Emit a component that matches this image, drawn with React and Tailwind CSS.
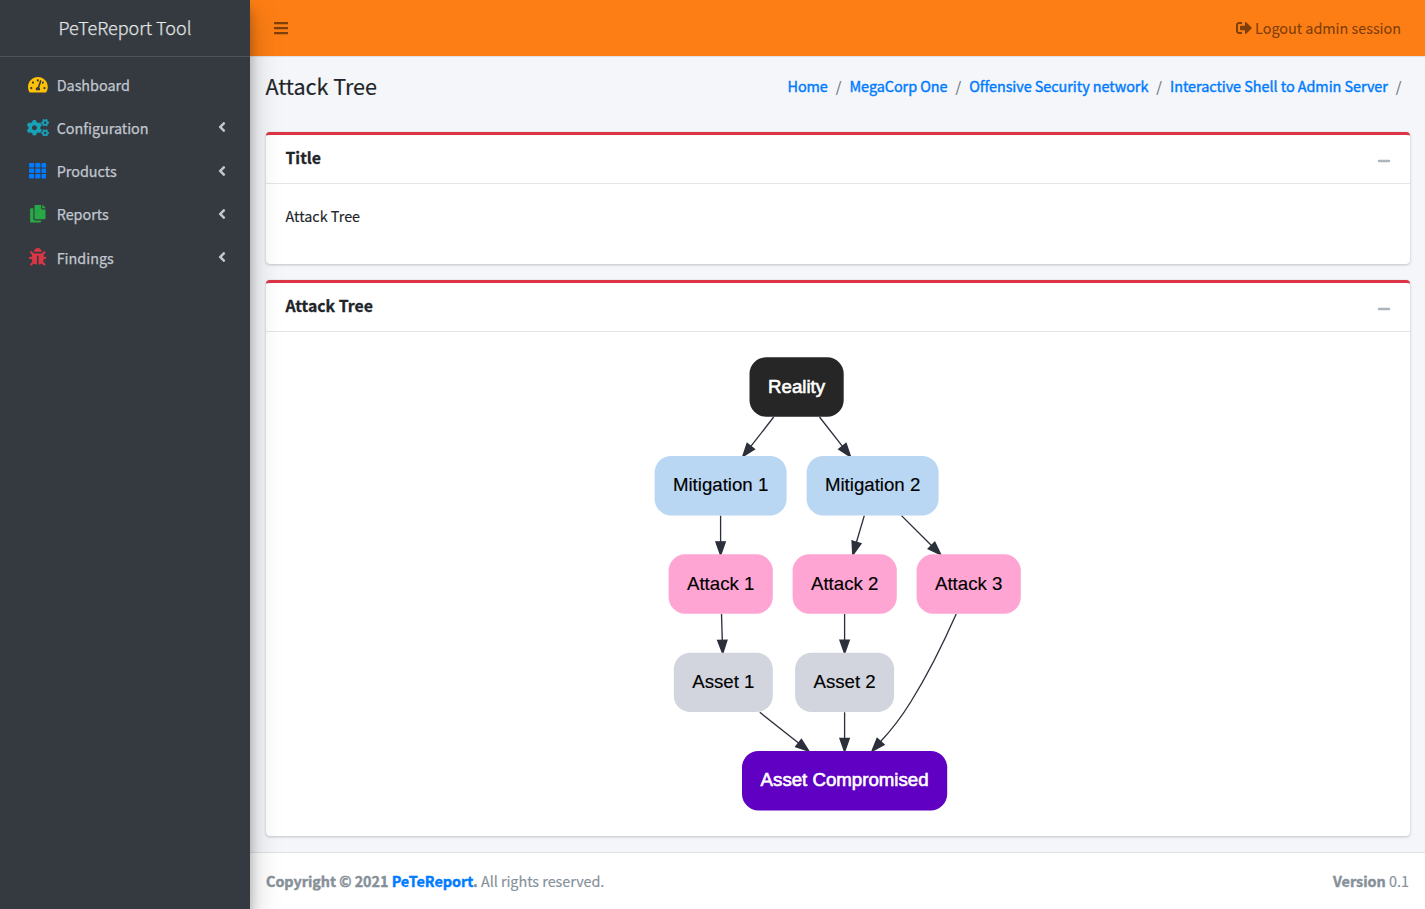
import React from "react";
import {
  FaTachometerAlt,
  FaCogs,
  FaTh,
  FaCopy,
  FaBug,
  FaAngleLeft,
  FaSignOutAlt,
  FaBars,
  FaMinus,
} from "react-icons/fa";

const navItems = [
  { label: "Dashboard", Icon: FaTachometerAlt, style: "w-[19.8px] text-[#ffc107]", expandable: false },
  { label: "Configuration", Icon: FaCogs, style: "w-[22px] text-[#17a2b8]", expandable: true },
  { label: "Products", Icon: FaTh, style: "w-[17.6px] text-[#007bff]", expandable: true },
  { label: "Reports", Icon: FaCopy, style: "w-[17.6px] text-[#28a745]", expandable: true },
  { label: "Findings", Icon: FaBug, style: "w-[17.6px] text-[#dc3545]", expandable: true },
];

const crumbs = ["Home", "MegaCorp One", "Offensive Security network", "Interactive Shell to Admin Server"];

const nodes = [
  { label: "Reality", x: 749.5, y: 357.3, w: 94.2, fill: "#262626", light: true },
  { label: "Mitigation 1", x: 654.6, y: 456, w: 132, fill: "#b9d6f2" },
  { label: "Mitigation 2", x: 806.6, y: 456, w: 132, fill: "#b9d6f2" },
  { label: "Attack 1", x: 668.6, y: 554.3, w: 104.2, fill: "#ffa5d3" },
  { label: "Attack 2", x: 792.6, y: 554.3, w: 104.2, fill: "#ffa5d3" },
  { label: "Attack 3", x: 916.6, y: 554.3, w: 104.2, fill: "#ffa5d3" },
  { label: "Asset 1", x: 673.8, y: 652.7, w: 99, fill: "#d2d5dd" },
  { label: "Asset 2", x: 795.1, y: 652.7, w: 99, fill: "#d2d5dd" },
  { label: "Asset Compromised", x: 742, y: 751, w: 205.2, fill: "#5f00c2", light: true },
];

const edges = [
  { d: "M773.7 417L751 446.2", x: 742.6, y: 456.8, a: 128 },
  { d: "M819.5 417L842.3 446.2", x: 850.6, y: 456.8, a: 52 },
  { d: "M720.6 515.6V542", x: 720.6, y: 555.2, a: 90 },
  { d: "M864.3 515.6L856.5 542", x: 852.8, y: 555, a: 106.2 },
  { d: "M901.5 515.6L931.5 545.5", x: 940.9, y: 554.9, a: 45 },
  { d: "M721.5 614L722.3 640.4", x: 722.7, y: 653.6, a: 88.3 },
  { d: "M844.6 614V640.4", x: 844.6, y: 653.6, a: 90 },
  { d: "M956.2 614C946.5 636 930 671 911 701.5C901.5 717 890 731.5 880.6 741.5", x: 871.8, y: 751.4, a: 131.5 },
  { d: "M759.8 712.3L798.5 743", x: 809, y: 751.3, a: 38.3 },
  { d: "M844.6 712.3V738.5", x: 844.6, y: 751.8, a: 90 },
];

function AttackTree() {
  return (
    <svg className="block" width="376" height="464" viewBox="650 351 376 464" role="img" aria-label="Attack Tree">
      {edges.map((e) => (
        <g key={e.d} fill="none" stroke="#2b303a" strokeWidth="1.33">
          <path d={e.d} />
          <path
            d="M0 0L-13.33 -4.67V4.67Z"
            fill="#2b303a"
            transform={`translate(${e.x} ${e.y}) rotate(${e.a})`}
          />
        </g>
      ))}
      {nodes.map((n) => (
        <g key={n.label}>
          <rect x={n.x} y={n.y} width={n.w} height="59.4" rx="16.5" fill={n.fill} />
          <text
            x={n.x + n.w / 2}
            y={n.y + 35.3}
            textAnchor="middle"
            fontFamily="'Liberation Sans', Arial, sans-serif"
            fontSize="18.67"
            fill={n.light ? "#fff" : "#000"}
            stroke={n.light ? "#fff" : "#000"}
            strokeWidth={n.light ? "0.6" : "0.15"}
          >
            {n.label}
          </text>
        </g>
      ))}
    </svg>
  );
}

function Card({ title, className, children }) {
  return (
    <section
      className={`flex flex-col rounded border-t-3 border-[#dc3545] bg-white shadow-[0_0_1px_rgba(0,0,0,0.125),0_1px_3px_rgba(0,0,0,0.2)] ${className}`}
    >
      <header className="flex h-[49px] shrink-0 items-center justify-between border-b border-black/10 pr-[18.5px] pl-5">
        <h3 className="pb-0.5 text-[15.8px] leading-6 font-bold [-webkit-text-stroke:0.3px]">{title}</h3>
        <FaMinus className="mt-1 size-[14px] text-[#adb5bd]" />
      </header>
      {children}
    </section>
  );
}

export default function App() {
  return (
    <div className="flex h-[909px] w-full overflow-hidden bg-[#f4f6f9] font-['Noto_Sans_CJK_SC','Source_Sans_Pro',sans-serif] text-[14.4px] leading-6 text-[#212529] [-webkit-text-stroke:0.15px]">
      <aside className="relative z-10 flex w-[250px] shrink-0 flex-col bg-[#343a40] shadow-[0_14px_28px_rgba(0,0,0,0.25),0_10px_10px_rgba(0,0,0,0.22)]">
        <div className="flex h-[57px] items-center justify-center border-b border-[#4b545c] pb-[3px] text-[18px] font-light text-white/80 [-webkit-text-stroke:0.25px]">
          PeTeReport Tool
        </div>
        <nav className="flex flex-col gap-[3.2px] px-2 pt-[7.8px] [-webkit-text-stroke:0.25px]">
          {navItems.map(({ label, Icon, style, expandable }) => (
            <a key={label} className="flex h-10 items-center pr-3 pl-4 text-[#c2c7d0]">
              <span className="-mt-px flex w-[27.4px] justify-center">
                <Icon className={`h-[17.6px] shrink-0 ${style}`} />
              </span>
              <span className="ml-[5.3px] grow tracking-[-0.02px]">{label}</span>
              {expandable && <FaAngleLeft className="-mt-px size-4 shrink-0" />}
            </a>
          ))}
        </nav>
      </aside>

      <div className="flex min-w-0 grow flex-col">
        <header className="flex h-[57px] shrink-0 items-center justify-between border-b border-[#dee2e6] bg-[#fd7e14] pr-6 pl-[23px] text-black/50">
          <FaBars className="size-4" />
          <a className="flex items-center gap-[3.5px]">
            <FaSignOutAlt className="size-4" />
            <span className="tracking-[-0.02px]">Logout admin session</span>
          </a>
        </header>

        <main className="flex grow flex-col px-[15.5px]">
          <div className="flex h-[75px] shrink-0 items-start justify-between pt-[14px]">
            <h1 className="text-[21.6px] leading-[30px] tracking-[-0.05px]">Attack Tree</h1>
            <ol className="flex pt-[3px]">
              {crumbs.map((c) => (
                <li key={c} className="flex">
                  <a className="tracking-[-0.035px] text-[#007bff] [-webkit-text-stroke:0.4px]">{c}</a>
                  <span className="px-2 text-[#6c757d]">/</span>
                </li>
              ))}
            </ol>
          </div>

          <Card title="Title" className="h-[132px]">
            <p className="px-5 pt-5">Attack Tree</p>
          </Card>
          <Card title="Attack Tree" className="mt-4 h-[556px]">
            <div className="flex justify-center pt-[19px]">
              <AttackTree />
            </div>
          </Card>
        </main>

        <footer className="flex h-[57px] shrink-0 items-center justify-between border-t border-[#dee2e6] bg-white px-4 text-[#869099]">
          <p className="tracking-[-0.04px]">
            <strong className="font-bold [-webkit-text-stroke:0.4px]">
              Copyright © 2021 <a className="text-[#007bff]">PeTeReport</a>.
            </strong>{" "}
            All rights reserved.
          </p>
          <p>
            <strong className="font-bold [-webkit-text-stroke:0.4px]">Version</strong> 0.1
          </p>
        </footer>
      </div>
    </div>
  );
}
